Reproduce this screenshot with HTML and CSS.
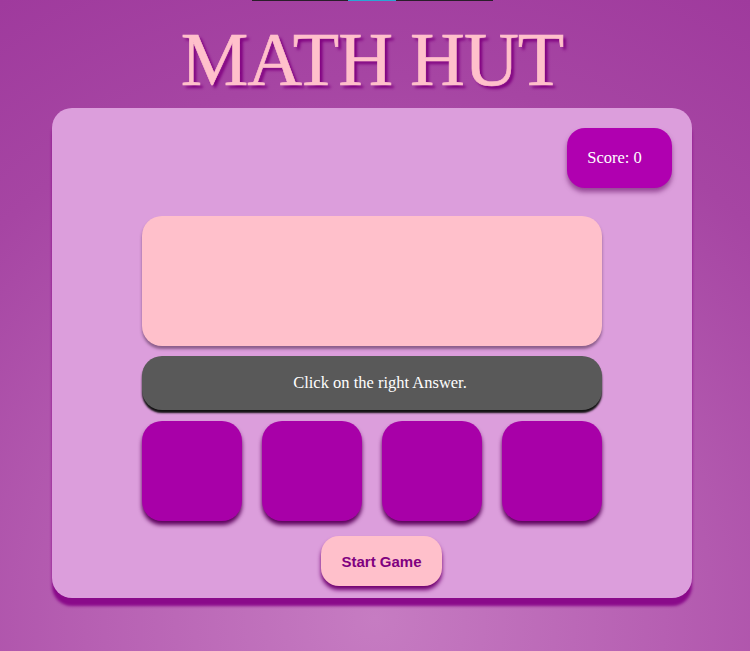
FILE: index.html
```html
<!DOCTYPE html>
<html lang="en">
<head>
<meta charset="utf-8">
<title>Math Hut</title>
<link rel="stylesheet" href="styles.css">
</head>
<body>
<div class="page">
  <div class="topline"><span class="seg"></span></div>
  <h1 class="title">MATH HUT</h1>
  <div class="card">
    <div class="score-row">
      <div class="score"><span class="score-text">Score: 0</span></div>
    </div>
    <div class="game">
      <div class="question"></div>
      <div class="instruction"><span class="instruction-text">Click on the right Answer.</span></div>
      <div class="choices">
        <div class="choice"></div>
        <div class="choice"></div>
        <div class="choice"></div>
        <div class="choice"></div>
      </div>
      <div class="start-row">
        <button class="start">Start Game</button>
      </div>
    </div>
  </div>
</div>
</body>
</html>
```

FILE: styles.css
```css
html {
  min-height: 100%;
  background: radial-gradient(circle at 50% 95%, #c67cc2 0%, #b65fb2 40%, #a645a3 75%, #9f3a9d 100%);
}
body {
  margin: 0;
  font-family: "Liberation Serif", serif;
}
.page {
  width: 744px;
  padding-bottom: 40px;
}
.topline {
  width: 241px;
  height: 1px;
  margin: 0 auto;
  background: #2a1e2a;
  display: flex;
}
.seg {
  width: 48px;
  margin-left: 96px;
  background: #2aa6d6;
}
.title {
  margin: 20px 0 11px;
  font-family: "Liberation Serif", serif;
  font-weight: normal;
  font-size: 76px;
  line-height: 76px;
  letter-spacing: -1px;
  text-align: center;
  color: #ffc0cb;
  text-shadow: 3px 3px 3px #800080;
  -webkit-text-stroke: 0.6px #ffc0cb;
}
.card {
  width: 640px;
  margin: 0 auto;
  box-sizing: border-box;
  padding: 20px 20px 12px;
  background: #dc9edc;
  border-radius: 20px;
  box-shadow: 0 8px 3px #8a0a8a;
}
.score-row {
  display: flex;
  justify-content: flex-end;
}
.score {
  width: 105px;
  height: 60px;
  box-sizing: border-box;
  padding-right: 10px;
  display: flex;
  align-items: center;
  justify-content: center;
  background: #b000b0;
  color: #fff;
  font-size: 16.5px;
  border-radius: 18px;
  box-shadow: 0 4px 5px rgba(90, 0, 90, 0.55);
}
.game {
  width: 460px;
  margin: 28px auto 0;
  display: flex;
  flex-direction: column;
}
.question {
  height: 130px;
  background: #ffc0cb;
  border-radius: 20px;
  box-shadow: 0 3px 3px rgba(60, 30, 60, 0.5);
}
.instruction {
  height: 54px;
  margin-top: 10px;
  box-sizing: border-box;
  padding-left: 16px;
  display: flex;
  align-items: center;
  justify-content: center;
  background: #595959;
  color: #fff;
  font-size: 16.5px;
  border-radius: 20px;
  box-shadow: 0 3px 2px #111;
}
.choices {
  margin-top: 11px;
  display: flex;
  gap: 20px;
}
.choice {
  width: 100px;
  height: 100px;
  background: #a800a8;
  border-radius: 20px;
  box-shadow: 0 4px 4px #5c005c;
}
.start-row {
  display: flex;
  justify-content: center;
  margin-top: 15px;
  padding-left: 19px;
}
.start {
  width: 121px;
  height: 50px;
  border: none;
  border-radius: 18px;
  background: #ffc0cb;
  color: #800080;
  font-family: "Liberation Sans", sans-serif;
  font-weight: bold;
  font-size: 15px;
  padding: 0;
  box-shadow: 0 4px 4px #700070;
}
```
